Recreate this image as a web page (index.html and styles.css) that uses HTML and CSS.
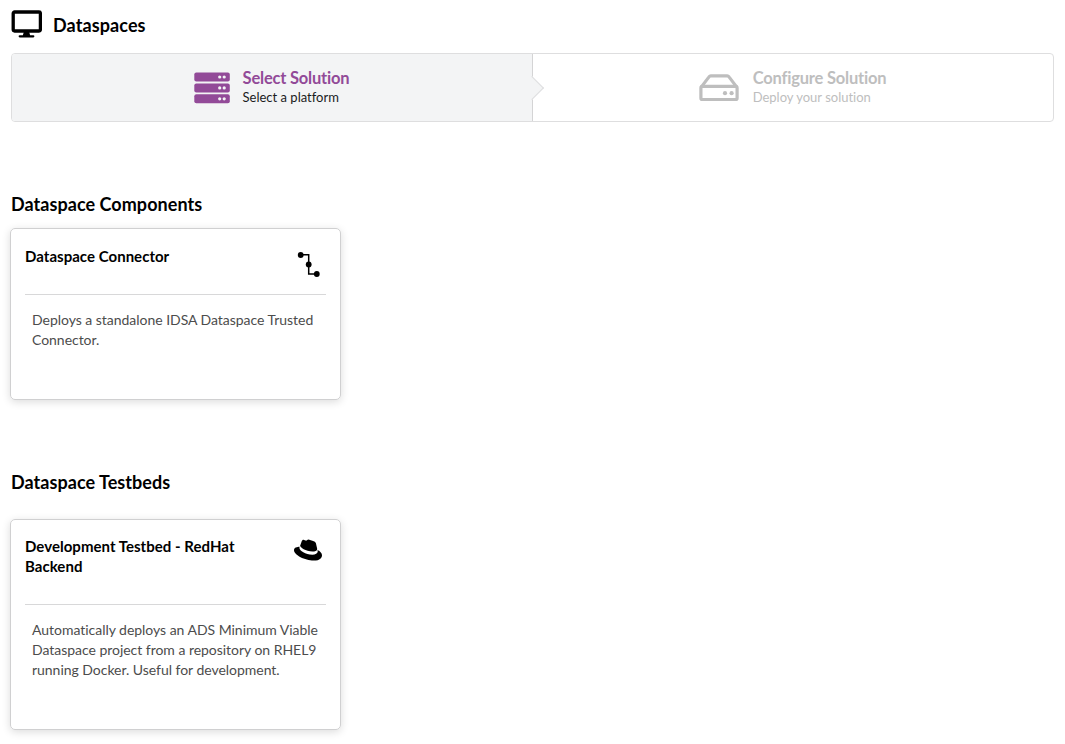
FILE: index.html
```html
<!DOCTYPE html>
<html lang="en">
<head>
<meta charset="utf-8">
<title>Dataspaces</title>
<link rel="stylesheet" href="styles.css">
</head>
<body>
<main class="page">
  <header class="page-header">
    <svg class="icon-desktop" viewBox="0 0 31 28" aria-hidden="true">
      <rect x="2.200" y="2" width="27.200" height="19" rx="1.400" fill="none" stroke="currentColor" stroke-width="3.300"/>
      <path d="M12.800 22h5.400l.9 3.200h3.200a1.100 1.100 0 0 1 0 2.200H8.700a1.100 1.100 0 0 1 0-2.200h3.200z" fill="currentColor"/>
    </svg>
    <h1 class="page-title">Dataspaces</h1>
  </header>

  <nav class="steps">
    <div class="step step-active">
      <svg class="icon-server" viewBox="0 0 36 32" aria-hidden="true">
        <g fill="currentColor">
          <rect x="0.300" y="0.500" width="35.500" height="9" rx="2"/>
          <rect x="0.300" y="11.400" width="35.500" height="9" rx="2"/>
          <rect x="0.300" y="22.300" width="35.500" height="9" rx="2"/>
        </g>
        <g class="lights">
          <circle cx="25.700" cy="5" r="1.600"/><circle cx="30.200" cy="5" r="1.600"/>
          <circle cx="25.700" cy="15.900" r="1.600"/><circle cx="30.200" cy="15.900" r="1.600"/>
          <circle cx="25.700" cy="26.800" r="1.600"/><circle cx="30.200" cy="26.800" r="1.600"/>
        </g>
      </svg>
      <div class="step-content">
        <div class="step-title">Select Solution</div>
        <div class="step-description">Select a platform</div>
      </div>
    </div>
    <div class="step step-disabled">
      <svg class="icon-drive" viewBox="0 0 40 28" aria-hidden="true">
        <g fill="none" stroke="currentColor" stroke-width="3.200" stroke-linejoin="round">
          <rect x="1.900" y="12.300" width="36.200" height="13.200" rx="1.600"/>
          <path d="M2.200 13.100 10 2.900q.7-1 1.800-1h16.400q1.100 0 1.800 1l7.800 10.200"/>
        </g>
        <g fill="currentColor"><circle cx="26" cy="19.200" r="2.100"/><circle cx="32.600" cy="19.200" r="2.100"/></g>
      </svg>
      <div class="step-content">
        <div class="step-title">Configure Solution</div>
        <div class="step-description">Deploy your solution</div>
      </div>
    </div>
  </nav>

  <section class="group">
    <h2 class="group-title">Dataspace Components</h2>
    <article class="card card-component">
      <div class="card-head">
        <h3 class="card-title">Dataspace Connector</h3>
        <svg class="icon-connector" viewBox="0 0 24 28" aria-hidden="true">
          <path d="M3.500 4.700h8.200v19.200h8.100" fill="none" stroke="currentColor" stroke-width="1.500"/>
          <g fill="currentColor"><circle cx="3.700" cy="5" r="2.900"/><circle cx="11.700" cy="14.500" r="2.900"/><circle cx="19.800" cy="24" r="2.900"/></g>
        </svg>
      </div>
      <p class="card-text">Deploys a standalone IDSA Dataspace Trusted Connector.</p>
    </article>
  </section>

  <section class="group">
    <h2 class="group-title">Dataspace Testbeds</h2>
    <article class="card card-testbed">
      <div class="card-head">
        <h3 class="card-title">Development Testbed - RedHat Backend</h3>
        <svg class="icon-hat" viewBox="0 0 512 512" aria-hidden="true">
          <path fill="currentColor" d="M341.520 285.560c33.650 0 82.340-6.940 82.340-47 .22-6.740.86-1.820-20.880-96.240-4.620-19.150-8.680-27.840-42.310-44.650-26.090-13.340-82.920-35.370-99.730-35.370-15.660 0-20.200 20.170-38.870 20.170-18 0-31.310-15.060-48.120-15.060-16.140 0-26.660 11-34.780 33.620-27.500 77.550-26.280 74.270-26.120 78.270 0 24.800 97.640 106.110 228.470 106.110M429 254.840c4.650 22 4.650 24.350 4.650 27.250 0 37.660-42.330 58.560-98 58.560-125.740.08-235.910-73.650-235.910-122.330a49.550 49.550 0 0 1 4.060-19.720C58.560 200.860 0 208.930 0 260.630c0 84.670 200.630 189 359.490 189 121.790 0 152.510-55.080 152.510-98.580 0-34.210-29.590-73.050-82.930-96.240"/>
        </svg>
      </div>
      <p class="card-text">Automatically deploys an ADS Minimum Viable Dataspace project from a repository on RHEL9 running Docker. Useful for development.</p>
    </article>
  </section>
</main>
</body>
</html>
```

FILE: styles.css
```css
* { box-sizing: border-box; }
body {
  margin: 0;
  background: #fff;
  color: #000;
  font: 14px/20px Lato, "Liberation Sans", sans-serif;
}
h1, h2, h3, p { margin: 0; }
svg { display: block; flex: none; }

.page { min-height: 744px; padding: 10px 11px 14px; }
.page-header { display: flex; align-items: flex-start; gap: 11px; height: 43px; }
.icon-desktop { width: 31px; height: 28px; }
.page-title { font-size: 18px; line-height: 30px; font-weight: 700; letter-spacing: .1px; }

.steps {
  display: flex;
  height: 69px;
  border: 1px solid #dededf;
  border-radius: 4px;
}
.step { flex: 1; display: flex; align-items: center; justify-content: center; position: relative; }
.step-active { background: #f3f4f5; border-right: 1px solid #d4d4d5; border-radius: 3px 0 0 3px; }
/* Pointer that leads from the active step into the next one */
.step-active::after {
  content: "";
  position: absolute;
  z-index: 1;
  top: 50%;
  right: -1px;
  width: 16px;
  height: 16px;
  background: #f3f4f5;
  border: 1px solid #dededf;
  border-width: 0 1px 1px 0;
  transform: translate(calc(50% - 1px), -50%) rotate(-45deg);
}
.icon-server { width: 36px; height: 32px; margin-right: 13px; color: #924a98; }
.lights { fill: #f3f4f5; }
.icon-drive { width: 40px; height: 28px; margin-right: 14px; }
.step-content { margin-right: 1px; }
.step-title { font-size: 16.500px; line-height: 18px; font-weight: 700; letter-spacing: -.2px; }
.step-active .step-title { color: #924a98; }
.step-description { margin-top: 2px; font-size: 13px; line-height: 17px; color: #1b1c1d; font-variant-ligatures: none; }
.step-disabled, .step-disabled .step-description { color: #bebebe; }

.group { padding-top: 71px; }
.group-title { font-size: 18px; line-height: 23px; font-weight: 700; letter-spacing: .05px; }
.card {
  width: 331px;
  margin-left: -1px;
  padding: 0 14px;
  border: 1px solid #d0d0d1;
  border-radius: 5px;
  box-shadow: 0 2px 8px rgba(0, 0, 0, .14);
}
.card-component { height: 172px; margin-top: 12px; }
.card-testbed { height: 211px; margin-top: 25px; }
.card-head { display: flex; justify-content: space-between; border-bottom: 1px solid #d8d8d9; }
.card-component .card-head { height: 66px; padding-top: 17px; }
.card-testbed .card-head { height: 85px; padding-top: 16px; }
.card-title { width: 235px; font-size: 15px; line-height: 20px; font-weight: 700; letter-spacing: .03px; }
.icon-connector { width: 24px; height: 28px; margin: 4px 5px 0 0; }
.icon-hat { width: 28px; height: 28px; margin-right: 4px; }
.card-text { padding: 15px 0 0 7px; color: #4c4c4c; letter-spacing: -.03px; }
```
